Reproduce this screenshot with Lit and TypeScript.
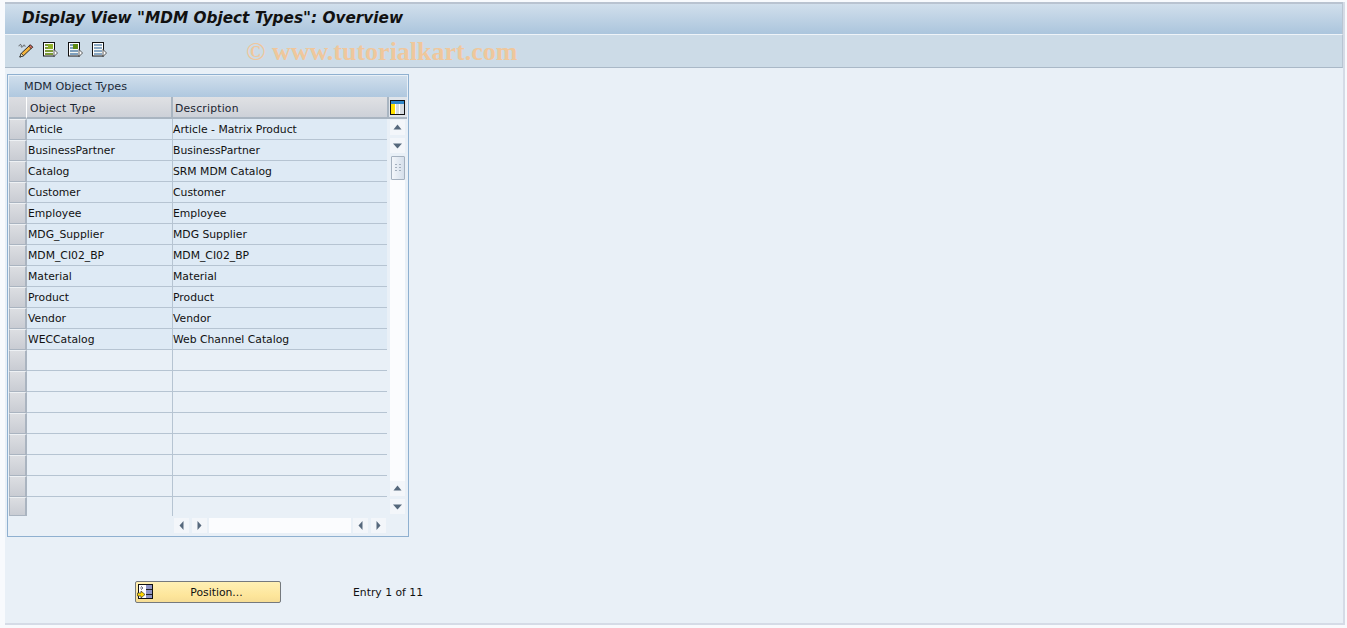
import { LitElement, html, css, svg } from "lit";
import { customElement } from "lit/decorators.js";

const ROWS: [string, string][] = [
  ["Article", "Article - Matrix Product"],
  ["BusinessPartner", "BusinessPartner"],
  ["Catalog", "SRM MDM Catalog"],
  ["Customer", "Customer"],
  ["Employee", "Employee"],
  ["MDG_Supplier", "MDG Supplier"],
  ["MDM_CI02_BP", "MDM_CI02_BP"],
  ["Material", "Material"],
  ["Product", "Product"],
  ["Vendor", "Vendor"],
  ["WECCatalog", "Web Channel Catalog"],
  ["", ""], ["", ""], ["", ""], ["", ""], ["", ""], ["", ""], ["", ""], ["", ""],
];

const tri = (p: string) => svg`<svg width="15" height="15" viewBox="0 0 15 15"><path d="${p}" fill="#56687c"/></svg>`;
const UP = tri("M3.5 9.5 L7.5 4.5 L11.5 9.5 Z");
const DOWN = tri("M3 5.5 H12 L7.5 10.5 Z");
const LEFT = tri("M9.5 3 V12 L5.5 7.5 Z");
const RIGHT = tri("M5.5 3 V12 L9.5 7.5 Z");

@customElement("app-root")
export class AppRoot extends LitElement {
  static styles = css`
    :host { display: block; height: 628px; background: #f8fafd; font-family: "DejaVu Sans", Tahoma, sans-serif; font-size: 10.8px; color: #111; overflow: hidden; }
    .main { margin: 2px 2px 0 5px; height: 623px; box-sizing: border-box; display: flex; flex-direction: column; background: #e9f0f7; border-right: 2px solid #d5dbe6; border-bottom: 2px solid #d5dbe6; }
    .title { height: 33px; box-sizing: border-box; border-top: 2px solid #b9c3d0; border-right: 1px solid #b9c5d2; padding: 0 0 2px 17px; display: flex; align-items: center; background: linear-gradient(#d1dfec, #abc5dd); font: italic bold 15.3px "DejaVu Sans", sans-serif; color: #111; border-bottom: 1px solid #eef3f8; white-space: nowrap; }
    .toolbar { height: 33px; box-sizing: border-box; border-bottom: 1px solid #a9b8c7; border-right: 1px solid #b9c5d2; background: #ccdbe7; display: flex; align-items: center; padding: 0 0 2px 13px; gap: 8px; position: relative; }
    .toolbar svg { display: block; }
    .toolbar .d2 { margin-left: 1px; }
    .wm { position: absolute; left: 241px; top: 2px; font: bold 26px "Liberation Serif", serif; color: #efc79c; white-space: nowrap; }
    .panel { margin: 6px 0 0 2px; width: 402px; height: 463px; box-sizing: border-box; border: 1px solid #8fb0d0; padding: 1px; position: relative; }
    .ptitle { height: 21px; line-height: 22px; padding-left: 15px; font-size: 11.2px; background: linear-gradient(#cfdeec, #b0c8df); color: #1c2a38; }
    .head { display: flex; height: 22px; }
    .sel { width: 18px; box-sizing: border-box; }
    .head .sel { background: linear-gradient(#dcdde1, #cdd0d6); border-right: 1px solid #fff; border-bottom: 2px solid #a9b5c1; }
    .hcell { box-sizing: border-box; height: 22px; padding: 1px 0 0 3px; line-height: 21px; letter-spacing: .2px; background: linear-gradient(#e0e1e4 , #cdd1d8); border-right: 2px solid #a9b5c1; border-bottom: 2px solid #a9b5c1; color: #1a2430; }
    .h1 { width: 146px; }
    .h2 { width: 216px; padding-left: 2px; }
    .cfg { width: 18px; display: flex; justify-content: center; align-items: center; border-bottom: 2px solid #a9b5c1; box-sizing: border-box; height: 22px; background: #dfe4ea; padding-right: 2px; }
    .body { display: flex; }
    .rows { width: 378px; }
    .row { display: flex; height: 21px; box-sizing: border-box; }
    .row .sel { background: linear-gradient(#dcdee2, #c9ccd3); border-width: 1px 2px 1px 1px; border-style: solid; border-color: #eef1f4 #aab4c0 #aab4c0 #aab4c0; }
    .cell { box-sizing: border-box; border-bottom: 1px solid #b6c4d2; line-height: 22px; padding-left: 1px; white-space: nowrap; }
    .filled .cell { background: #deeaf5; }
    .c1 { width: 146px; border-right: 1px solid #b6c4d2; }
    .c2 { width: 214px; padding-left: 0; }
    .row:last-child { height: 19px; }
    .row:last-child .cell { border-bottom: 0; }
    .vs { margin-left: 3px; width: 15px; display: flex; flex-direction: column; padding: 1px 0 2px; box-sizing: border-box; }
    .btn { width: 15px; height: 15px; background: #f3f6fa; flex: none; display: block; }
    .btn svg { display: block; }
    .vs .gap3 { margin-top: 3px; }
    .thumb { height: 24px; width: 14px; margin: 3px 0 0 1px; box-sizing: border-box; border: 1px solid #a5b1bf; border-radius: 1px; background: linear-gradient(90deg, #f3f6fa, #d5dfeb); flex: none; display: flex; align-items: center; justify-content: center; }
    .track { flex: 1; background: #fbfcfe; }
    .hs { display: flex; margin-top: 2px; height: 15px; padding-left: 165px; }
    .hs .g { margin-left: 3px; }
    .hs .htrack { width: 142px; margin-left: 2px; background: #fbfcfe; }
    .hs .h2g { margin-left: 2px; }
    .footer { display: flex; align-items: flex-start; margin-top: 44px; }
    .pos { margin-left: 130px; width: 146px; height: 22px; box-sizing: border-box; border: 1px solid #75797d; border-radius: 2px; background: linear-gradient(#fff0b4, #fde59a 70%, #f6dd95); position: relative; text-align: center; line-height: 22px; padding-left: 17px; color: #111; }
    .pos svg { position: absolute; left: 1px; top: 2px; }
    .entry { margin-left: 72px; line-height: 24px; color: #111; }
  `;

  private doc(fill: string, lower: string, cls = "") {
    return html`<svg class="${cls}" width="16" height="16" viewBox="0 0 16 16">
      <rect x="1.5" y="0.5" width="11" height="13.5" fill="#fff" stroke="#111"/>
      <rect x="3" y="2" width="8" height="11" fill="${lower}"/>
      <path d="M3 4.5H11M3 7.5H11M3 10.5H11" stroke="#f4f7f2"/>
      ${fill === "none" ? "" : svg`<rect x="6" y="2" width="5" height="5" fill="${fill}"/>`}
      <path d="M12 7.5 L15.5 11 L12 14.5 Z" fill="#fff" stroke="#333" stroke-width="0.8"/>
    </svg>`;
  }

  render() {
    return html`<div class="main">
      <div class="title">Display View "MDM Object Types": Overview</div>
      <div class="toolbar">
        <svg width="16" height="16" viewBox="0 0 17 16">
          <path d="M1 4 C2 1 4 2 3.5 4 C3 5.5 5 5.5 5.5 3.5 C6 2 8 3 7.5 4.5" fill="none" stroke="#444" stroke-width="0.9"/>
          <path d="M13 2.5 L15.5 5 L6 14 L2 15.5 L3.5 11.5 Z" fill="#f3b33c" stroke="#222" stroke-width="1"/>
          <path d="M13 2.5 L15.5 5 L14 6.5 L11.5 4 Z" fill="#e9736b" stroke="#222" stroke-width="0.8"/>
          <path d="M3.5 11.5 L6 14 L2 15.5 Z" fill="#fff2c8" stroke="#222" stroke-width="0.8"/>
        </svg>
        ${this.doc("#8fb02a", "#7d9a3a")}
        ${this.doc("#5e8a12", "#7fa0bd", "d2")}
        ${this.doc("none", "#8aa8c4")}
        <span class="wm">© www.tutorialkart.com</span>
      </div>
      <div class="panel">
        <div class="ptitle">MDM Object Types</div>
        <div class="head">
          <div class="sel"></div>
          <div class="hcell h1">Object Type</div>
          <div class="hcell h2">Description</div>
          <div class="cfg">
            <svg width="15" height="15" viewBox="0 0 15 15">
              <rect x="0.5" y="0.5" width="14" height="14" fill="#fff" stroke="#111"/>
              <rect x="1" y="1" width="13" height="3" fill="#2f86c8"/>
              <rect x="1" y="4" width="4" height="10" fill="#ffe100"/>
              <rect x="6" y="4" width="3" height="10" fill="#d6dce2"/>
              <rect x="10" y="4" width="4" height="10" fill="#d6dce2"/>
            </svg>
          </div>
        </div>
        <div class="body">
          <div class="rows">
            ${ROWS.map(([a, b]) => html`<div class="row ${a ? "filled" : ""}">
              <div class="sel"></div>
              <div class="cell c1">${a}</div>
              <div class="cell c2">${b}</div>
            </div>`)}
          </div>
          <div class="vs">
            <span class="btn">${UP}</span>
            <span class="btn gap3">${DOWN}</span>
            <div class="thumb"><svg width="6" height="8" viewBox="0 0 6 8"><path d="M0 .5H2M4 .5H6M0 3.5H2M4 3.5H6M0 6.5H2M4 6.5H6" stroke="#a3afbd" stroke-width="1.2"/></svg></div>
            <div class="track"></div>
            <span class="btn">${UP}</span>
            <span class="btn gap3">${DOWN}</span>
          </div>
        </div>
        <div class="hs">
          <span class="btn">${LEFT}</span>
          <span class="btn g">${RIGHT}</span>
          <div class="htrack"></div>
          <span class="btn h2g">${LEFT}</span>
          <span class="btn g">${RIGHT}</span>
        </div>
      </div>
      <div class="footer">
        <div class="pos">
          <svg width="16" height="16" viewBox="0 0 16 16">
            <rect x="1.5" y="0.5" width="14" height="14" fill="#fff" stroke="#111"/>
            <rect x="9" y="1" width="6" height="13" fill="#8e93c4"/>
            <path d="M9 5.5H15M9 10.5H15" stroke="#222"/>
            <path d="M4 2 L6 4 L4 6M3 4H6" fill="none" stroke="#667" stroke-width="0.8"/>
            <path d="M0.5 9 H4 V7 L8 10.5 L4 14 V12 H0.5 Z" fill="#ffd800" stroke="#333" stroke-width="0.7"/>
          </svg>
          Position...
        </div>
        <div class="entry">Entry 1 of 11</div>
      </div>
    </div>`;
  }
}
